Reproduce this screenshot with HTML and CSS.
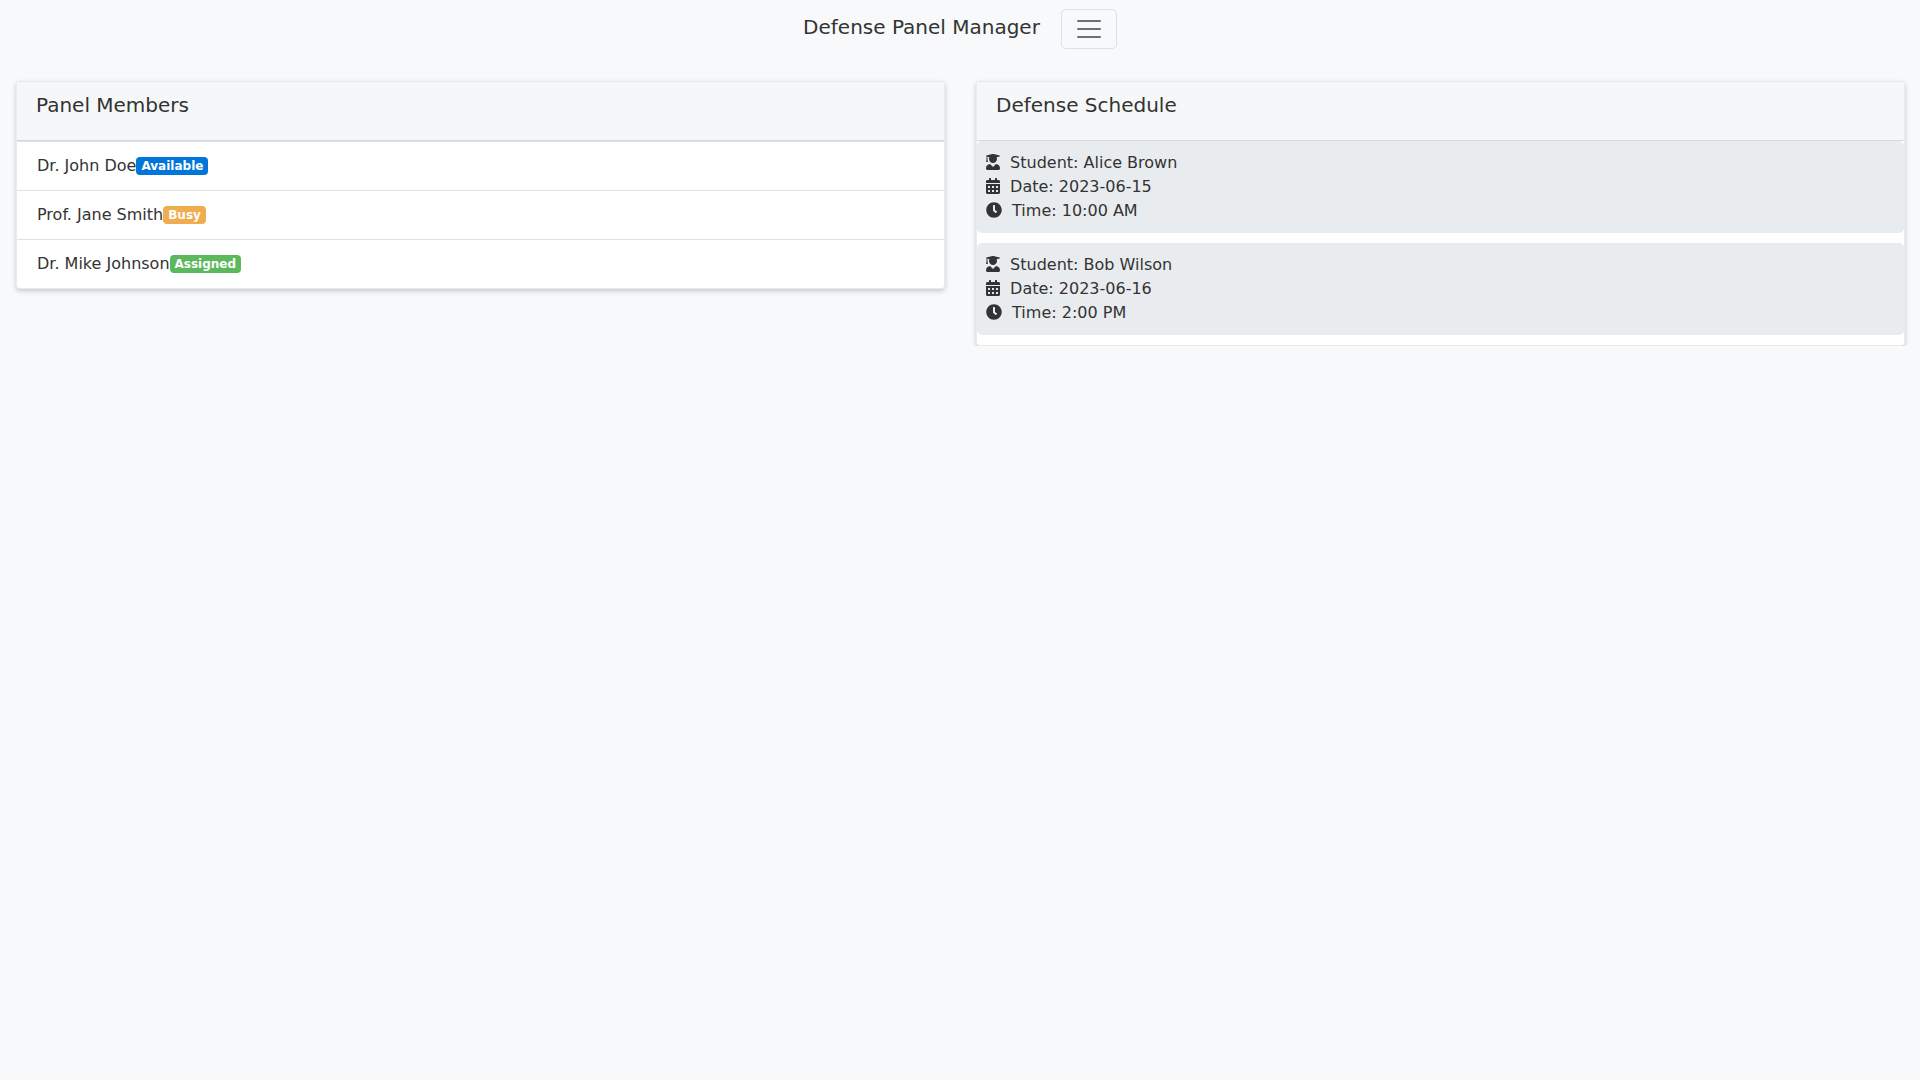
FILE: index.html
```html
<!DOCTYPE html>
<html lang="en">
<head>
    <meta charset="UTF-8">
    <meta name="viewport" content="width=device-width, initial-scale=1.0">
    <title>Defense Panel Manager</title>
    <link rel="stylesheet" href="styles.css">
</head>
<body>
    <!-- Navigation -->
    <nav class="navbar">
        <a class="brand" href="#">Defense Panel Manager</a>
        <button class="toggler" type="button" aria-label="Toggle navigation">
            <svg viewBox="0 0 30 30" width="30" height="30"><path d="M4 7h22M4 15h22M4 23h22" stroke="rgba(0,0,0,.55)" stroke-width="2" stroke-linecap="round" stroke-miterlimit="10" fill="none"/></svg>
        </button>
    </nav>

    <main class="columns">
        <!-- Panel Members -->
        <section class="card">
            <div class="card-header"><h5>Panel Members</h5></div>
            <ul class="member-list">
                <li>Dr. John Doe<span class="badge available">Available</span></li>
                <li>Prof. Jane Smith<span class="badge busy">Busy</span></li>
                <li>Dr. Mike Johnson<span class="badge assigned">Assigned</span></li>
            </ul>
        </section>

        <!-- Defense Schedule -->
        <section class="card">
            <div class="card-header"><h5>Defense Schedule</h5></div>
            <div class="schedule">
                <div class="defense-item">
                    <div><svg class="icon" viewBox="0 0 448 512"><use href="#fa-graduate"/></svg> Student: Alice Brown</div>
                    <div><svg class="icon" viewBox="0 0 448 512"><use href="#fa-calendar"/></svg> Date: 2023-06-15</div>
                    <div><svg class="icon" viewBox="0 0 512 512"><use href="#fa-clock"/></svg> Time: 10:00 AM</div>
                </div>
                <div class="defense-item">
                    <div><svg class="icon" viewBox="0 0 448 512"><use href="#fa-graduate"/></svg> Student: Bob Wilson</div>
                    <div><svg class="icon" viewBox="0 0 448 512"><use href="#fa-calendar"/></svg> Date: 2023-06-16</div>
                    <div><svg class="icon" viewBox="0 0 512 512"><use href="#fa-clock"/></svg> Time: 2:00 PM</div>
                </div>
            </div>
        </section>
    </main>

    <!-- Icon shapes -->
    <svg class="icon-defs" aria-hidden="true">
        <defs>
            <path id="fa-graduate" d="M319.4 320.6L224 416l-95.4-95.4C57.1 323.7 0 382.2 0 454.4v9.6c0 26.5 21.5 48 48 48h352c26.5 0 48-21.5 48-48v-9.6c0-72.2-57.1-130.7-128.6-133.8zM13.6 79.8l6.4 1.5v58.4c-7 4.2-12 11.5-12 20.3 0 8.4 4.6 15.4 11.1 19.7L3.5 242c-1.7 6.9 2.1 14 7.6 14h41.8c5.5 0 9.3-7.1 7.6-14l-15.6-62.3C51.4 175.4 56 168.4 56 160c0-8.8-5-16.1-12-20.3V87.1l66 15.9c-8.6 17.2-14 36.4-14 57 0 70.7 57.3 128 128 128s128-57.3 128-128c0-20.6-5.3-39.8-14-57l96.3-23.2c18.2-4.4 18.2-27.1 0-31.5l-190.4-46c-13-3.1-26.7-3.1-39.7 0L13.6 48.2c-18.1 4.4-18.1 27.2 0 31.6z"/>
            <path id="fa-calendar" d="M0 464c0 26.5 21.5 48 48 48h352c26.5 0 48-21.5 48-48V192H0v272zm320-196c0-6.6 5.4-12 12-12h40c6.6 0 12 5.4 12 12v40c0 6.6-5.4 12-12 12h-40c-6.6 0-12-5.4-12-12v-40zm0 128c0-6.6 5.4-12 12-12h40c6.6 0 12 5.4 12 12v40c0 6.6-5.4 12-12 12h-40c-6.6 0-12-5.4-12-12v-40zM192 268c0-6.6 5.4-12 12-12h40c6.6 0 12 5.4 12 12v40c0 6.6-5.4 12-12 12h-40c-6.6 0-12-5.4-12-12v-40zm0 128c0-6.6 5.4-12 12-12h40c6.6 0 12 5.4 12 12v40c0 6.6-5.4 12-12 12h-40c-6.6 0-12-5.4-12-12v-40zM64 268c0-6.6 5.4-12 12-12h40c6.6 0 12 5.4 12 12v40c0 6.6-5.4 12-12 12H76c-6.6 0-12-5.4-12-12v-40zm0 128c0-6.6 5.4-12 12-12h40c6.6 0 12 5.4 12 12v40c0 6.6-5.4 12-12 12H76c-6.6 0-12-5.4-12-12v-40zM400 64h-48V16c0-8.8-7.2-16-16-16h-32c-8.8 0-16 7.2-16 16v48H160V16c0-8.8-7.2-16-16-16h-32c-8.8 0-16 7.2-16 16v48H48C21.5 64 0 85.5 0 112v48h448v-48c0-26.5-21.5-48-48-48z"/>
            <path id="fa-clock" d="M256 8C119 8 8 119 8 256s111 248 248 248 248-111 248-248S393 8 256 8zm92.49 313l-20 25a16 16 0 0 1-22.49 2.5l-67-49.72a40 40 0 0 1-15-31.23V112a16 16 0 0 1 16-16h32a16 16 0 0 1 16 16v144l58 42.5a16 16 0 0 1 2.49 22.5z"/>
        </defs>
    </svg>
</body>
</html>
```

FILE: styles.css
```css
body {
    margin: 0;
    font-family: "DejaVu Sans", sans-serif;
    font-size: 16px;
    line-height: 24px;
    color: #333;
    background-color: #f8f9fa;
}

.navbar {
    display: flex;
    justify-content: center;
    align-items: flex-start;
    padding: 9px 0 8px;
    margin-bottom: 24px;
}

.brand {
    font-size: 20px;
    line-height: 30px;
    padding: 3px 0;
    margin-right: 21px;
    color: #333;
    text-decoration: none;
}

.toggler {
    display: block;
    width: 56px;
    height: 40px;
    padding: 4px 12px;
    background: transparent;
    border: 1px solid rgba(0, 0, 0, 0.1);
    border-radius: 5px;
}

.toggler svg {
    display: block;
}

.columns {
    display: flex;
    align-items: flex-start;
    gap: 31px;
    padding: 0 15px 0 16px;
}

.card {
    flex: 1;
    background-color: #fff;
    border: 1px solid rgba(0, 0, 0, 0.08);
    border-radius: 4px;
    box-shadow: 0 2px 5px rgba(0, 0, 0, 0.2);
}

.card-header {
    padding: 11px 19px 12px;
    background-color: #f6f7f8;
    border-bottom: 1px solid rgba(0, 0, 0, 0.125);
}

.card-header h5 {
    margin: 0 0 11px;
    font-size: 20px;
    font-weight: 500;
    line-height: 24px;
}

.member-list {
    list-style: none;
    margin: 0;
    padding: 0;
    border-top: 1px solid #dee2e6;
}

.member-list li {
    padding: 12px 20px;
    border-bottom: 1px solid #dee2e6;
}

.member-list li:last-child {
    border-bottom: none;
}

.badge {
    display: inline-block;
    padding: 3px 5px;
    font-size: 12px;
    font-weight: 700;
    line-height: 12px;
    color: #fff;
    border-radius: 4px;
    vertical-align: 1px;
}

.available {
    background-color: #0275d8;
}

.busy {
    background-color: #f0ad4e;
}

.assigned {
    background-color: #5cb85c;
}

.defense-item {
    padding: 10px 9px;
    margin-bottom: 10px;
    background-color: #e9ecef;
    border-radius: 5px;
}

.icon {
    height: 16px;
    width: auto;
    margin-right: 5px;
    fill: #333;
    vertical-align: -2px;
}

.icon-defs {
    display: none;
}
```
